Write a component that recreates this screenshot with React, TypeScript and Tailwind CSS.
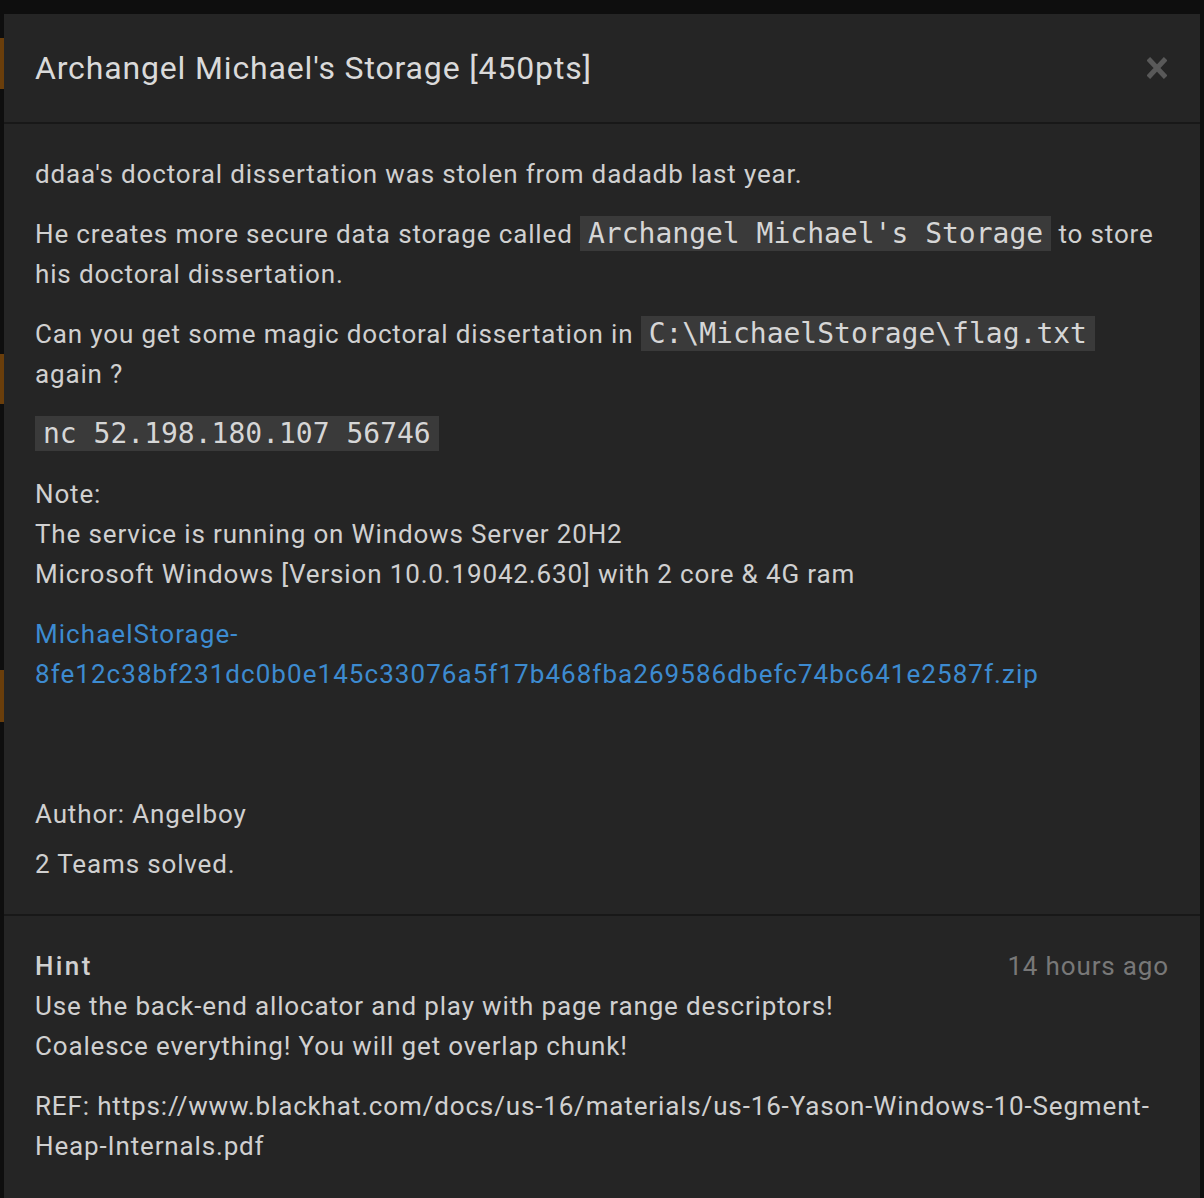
import React from "react";

const code =
  "bg-[#3a3a3a] px-[8px] py-[1px] font-['DejaVu_Sans_Mono','Liberation_Mono',monospace] text-[28px] tracking-normal text-[#d6d6d6]";

const App = () => {
  return (
    <div className="flex min-h-[1198px] bg-[#0e0e0e] font-['Roboto','Liberation_Sans',sans-serif] tracking-[0.85px]">
      {/* page behind the modal, peeking out on the left */}
      <div className="flex w-[4px] flex-col">
        <div className="h-[38px]" />
        <div className="h-[51px] bg-[#6a3e0b]" />
        <div className="h-[265px]" />
        <div className="h-[50px] bg-[#6a3e0b]" />
        <div className="h-[266px]" />
        <div className="h-[52px] bg-[#6a3e0b]" />
      </div>

      <div className="flex flex-1 flex-col pr-[4px] pt-[14px]">
        <div className="flex-1 bg-[#252525]">
          <div className="flex items-center justify-between border-b-2 border-[#181818] py-[34px] pl-[31px] pr-[33px]">
            <h4 className="text-[32px] leading-[40px] text-[#dadada]">
              Archangel Michael's Storage [450pts]
            </h4>
            <svg width="20" height="22" viewBox="0 0 20 22" className="text-[#595959]">
              <path
                d="M3 3.5 L17 18.5 M17 3.5 L3 18.5"
                stroke="currentColor"
                strokeWidth="5"
                strokeLinecap="square"
              />
            </svg>
          </div>

          <div className="border-b-2 border-[#181818] px-[31px] pb-[30px] pt-[30px] text-[26px] leading-[40px] text-[#d0d0d0]">
            <p className="mb-[20px]">
              ddaa's doctoral dissertation was stolen from dadadb last year.
            </p>
            <p className="mb-[20px]">
              He creates more secure data storage called{" "}
              <code className={code}>Archangel Michael's Storage</code> to store
              his doctoral dissertation.
            </p>
            <p className="mb-[20px]">
              Can you get some magic doctoral dissertation in{" "}
              <code className={code}>C:\MichaelStorage\flag.txt</code> again ?
            </p>
            <p className="mb-[20px]">
              <code className={code}>nc 52.198.180.107 56746</code>
            </p>
            <p className="mb-[20px]">
              Note:
              <br />
              The service is running on Windows Server 20H2
              <br />
              Microsoft Windows [Version 10.0.19042.630] with 2 core &amp; 4G ram
            </p>
            <p className="mb-[100px]">
              <a className="tracking-[1.05px] text-[#3d8bd0]">
                MichaelStorage-
                <wbr />
                8fe12c38bf231dc0b0e145c33076a5f17b468fba269586dbefc74bc641e2587f.zip
              </a>
            </p>
            <p className="mb-[10px]">Author: Angelboy</p>
            <p>2 Teams solved.</p>
          </div>

          <div className="px-[31px] pb-[32px] pt-[30px] text-[26px] leading-[40px] text-[#d0d0d0]">
            <div className="flex items-center justify-between">
              <span className="font-medium tracking-[2.4px]">Hint</span>
              <span className="text-[#787878]">14 hours ago</span>
            </div>
            <p className="mb-[20px]">
              Use the back-end allocator and play with page range descriptors!
              <br />
              Coalesce everything! You will get overlap chunk!
            </p>
            <p>
              REF:
              https://www.blackhat.com/docs/us-16/materials/us-16-Yason-Windows-10-Segment-Heap-Internals.pdf
            </p>
          </div>
        </div>
      </div>
    </div>
  );
};

export default App;
